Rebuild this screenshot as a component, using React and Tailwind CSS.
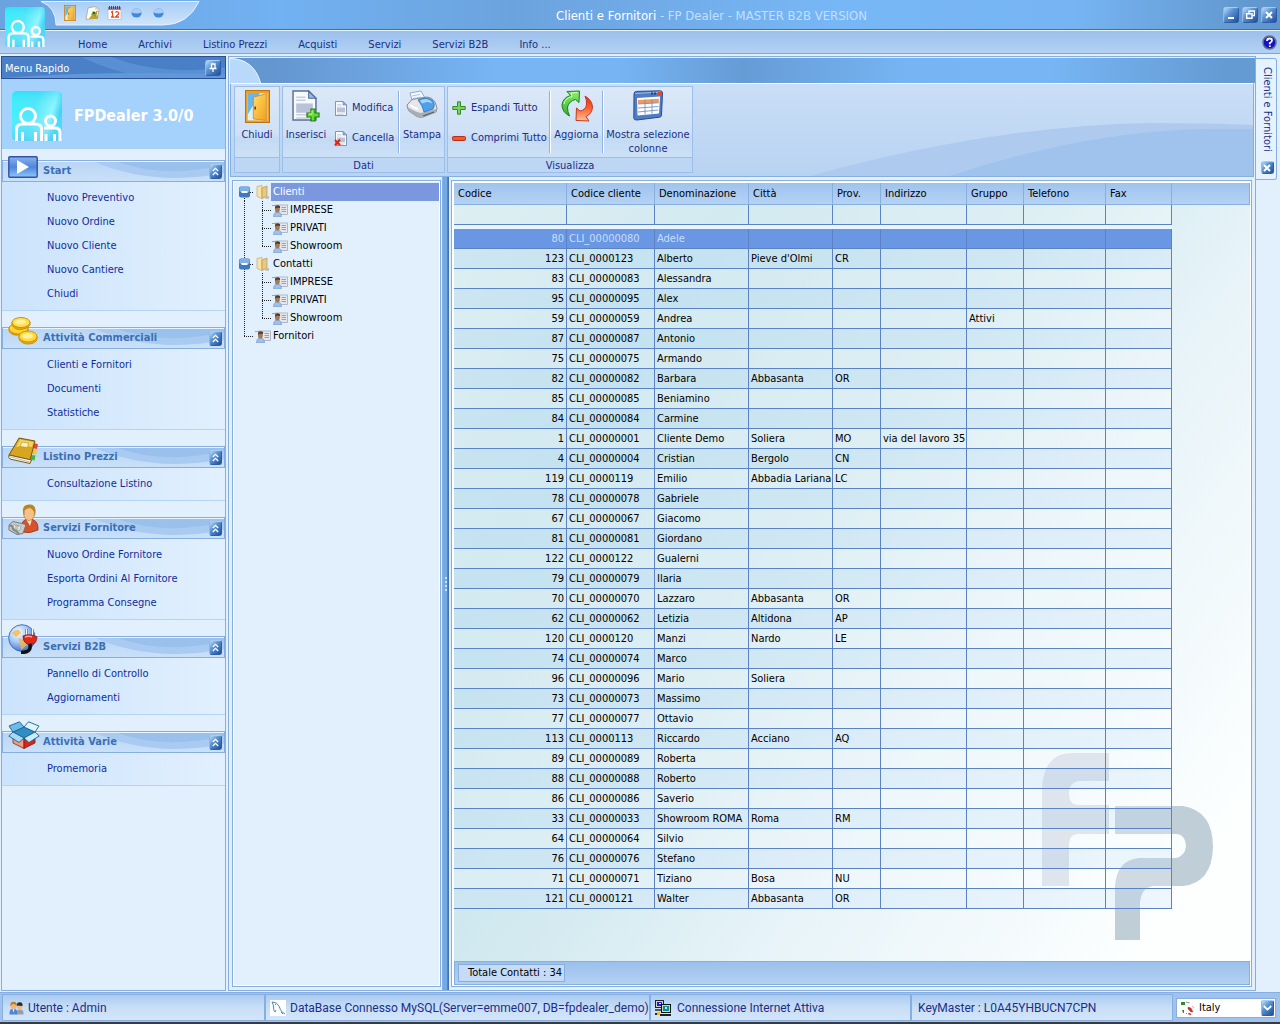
import React from "react";

const CUSTOMERS = [
  ["80", "CLI_00000080", "Adele"],
  ["123", "CLI_0000123", "Alberto", "Pieve d'Olmi", "CR"],
  ["83", "CLI_00000083", "Alessandra"],
  ["95", "CLI_00000095", "Alex"],
  ["59", "CLI_00000059", "Andrea", "", "", "", "Attivi"],
  ["87", "CLI_00000087", "Antonio"],
  ["75", "CLI_00000075", "Armando"],
  ["82", "CLI_00000082", "Barbara", "Abbasanta", "OR"],
  ["85", "CLI_00000085", "Beniamino"],
  ["84", "CLI_00000084", "Carmine"],
  ["1", "CLI_00000001", "Cliente Demo", "Soliera", "MO", "via del lavoro 35"],
  ["4", "CLI_00000004", "Cristian", "Bergolo", "CN"],
  ["119", "CLI_0000119", "Emilio", "Abbadia Lariana", "LC"],
  ["78", "CLI_00000078", "Gabriele"],
  ["67", "CLI_00000067", "Giacomo"],
  ["81", "CLI_00000081", "Giordano"],
  ["122", "CLI_0000122", "Gualerni"],
  ["79", "CLI_00000079", "Ilaria"],
  ["70", "CLI_00000070", "Lazzaro", "Abbasanta", "OR"],
  ["62", "CLI_00000062", "Letizia", "Altidona", "AP"],
  ["120", "CLI_0000120", "Manzi", "Nardo", "LE"],
  ["74", "CLI_00000074", "Marco"],
  ["96", "CLI_00000096", "Mario", "Soliera"],
  ["73", "CLI_00000073", "Massimo"],
  ["77", "CLI_00000077", "Ottavio"],
  ["113", "CLI_0000113", "Riccardo", "Acciano", "AQ"],
  ["89", "CLI_00000089", "Roberta"],
  ["88", "CLI_00000088", "Roberto"],
  ["86", "CLI_00000086", "Saverio"],
  ["33", "CLI_00000033", "Showroom ROMA", "Roma", "RM"],
  ["64", "CLI_00000064", "Silvio"],
  ["76", "CLI_00000076", "Stefano"],
  ["71", "CLI_00000071", "Tiziano", "Bosa", "NU"],
  ["121", "CLI_0000121", "Walter", "Abbasanta", "OR"],
];

const COLUMNS = [
  ["Codice", "w-[113px]"],
  ["Codice cliente", "w-[88px]"],
  ["Denominazione", "w-[94px]"],
  ["Città", "w-[84px]"],
  ["Prov.", "w-[48px]"],
  ["Indirizzo", "w-[86px]"],
  ["Gruppo", "w-[57px]"],
  ["Telefono", "w-[82px]"],
  ["Fax", "w-[66px]"],
];

function PeopleLogo({ size }) {
  return (
    <svg width={size} height={size} viewBox="0 0 50 50" className="shrink-0" aria-hidden="true">
      <defs>
        <linearGradient id="pl" x1="0" y1="0" x2="1" y2="0.3">
          <stop offset="0" stopColor="#3af0fb" />
          <stop offset="0.5" stopColor="#4fe6fb" />
          <stop offset="0.85" stopColor="#8ff5fd" />
          <stop offset="1" stopColor="#3fd3f5" />
        </linearGradient>
        <linearGradient id="pl2" x1="0" y1="0" x2="0" y2="1">
          <stop offset="0" stopColor="#19c6f0" stopOpacity="0.35" />
          <stop offset="0.4" stopColor="#8ff" stopOpacity="0" />
          <stop offset="1" stopColor="#5cc8f2" stopOpacity="0.7" />
        </linearGradient>
      </defs>
      <rect width="50" height="50" rx="5" fill="url(#pl)" />
      <rect width="50" height="50" rx="5" fill="url(#pl2)" />
      <g fill="none" stroke="#fff" strokeWidth="3">
        <circle cx="16" cy="25" r="7.5" />
        <circle cx="38.500" cy="30" r="5" />
        <path d="M4.500 50V38q0-5 6-5h13q6 0 6 5v12M10.500 50v-9M23.500 50v-9" />
        <path d="M32 37h11q5 0 5 4v9M34 50v-7M42.500 50v-7" />
      </g>
    </svg>
  );
}

function DoorIcon({ w, h }) {
  return (
    <svg width={w} height={h} viewBox="0 0 24 32" preserveAspectRatio="none" aria-hidden="true">
      <defs>
        <linearGradient id="door" x1="0" y1="0" x2="1" y2="1">
          <stop offset="0" stopColor="#ffdc6b" />
          <stop offset="1" stopColor="#f4a01a" />
        </linearGradient>
      </defs>
      <rect x="0.500" y="0.500" width="23" height="31" fill="#f0a11f" stroke="#b87414" />
      <rect x="2.500" y="3" width="19" height="26.500" fill="#d9f0ff" />
      <path d="M2.500 3h12L2.500 24z" fill="#63b7f2" />
      <path d="M8 7 20.500 3.500v26L8 28z" fill="url(#door)" stroke="#d08a1c" strokeWidth="0.800" />
      <rect x="9" y="16" width="1.500" height="3" fill="#6b3e05" />
    </svg>
  );
}

function EditSheetIcon() {
  return (
    <svg width="15" height="14" viewBox="0 0 15 14" aria-hidden="true">
      <path d="M3 2 10 0.500 14 3.500 12.500 12 1 13.500z" fill="#fdfdf6" stroke="#a9a38b" strokeWidth="0.800" />
      <path d="M10 0.500v3l4 0z" fill="#ddd6b8" />
      <path d="M8 5l4 2-1 5-5-3z" fill="#62b03a" />
      <path d="M7 11 12.500 5" stroke="#d98c17" strokeWidth="1.500" />
      <path d="M4 13q2-5 4-3t5-1v4z" fill="#c9a02f" />
      <circle cx="9" cy="7" r="1" fill="#333" />
    </svg>
  );
}

function CalendarIcon() {
  return (
    <svg width="15" height="14" viewBox="0 0 15 14" aria-hidden="true">
      <rect x="1" y="1.500" width="13" height="12" fill="#fff" stroke="#b9bfd2" strokeWidth="0.800" />
      <rect x="1" y="1" width="13" height="3" fill="#9a86a8" />
      <path d="M2.500 0v3M4.500 0v3M6.500 0v3M8.500 0v3M10.500 0v3M12.500 0v3" stroke="#403848" strokeWidth="0.900" />
      <path d="M4 6.500 5.500 5.500V11M4 11h3M8.500 6.500q1-1.500 2.500-.5t0 2.500L8.500 11H12" fill="none" stroke="#e0481e" strokeWidth="1.300" />
    </svg>
  );
}

function BallIcon() {
  return (
    <svg width="11" height="10" viewBox="0 0 11 10" aria-hidden="true">
      <ellipse cx="5.500" cy="5" rx="5" ry="4.500" fill="#3f87e0" />
      <path d="M0.500 4.500a5 4 0 0 1 10 0q-5 2-10 0z" fill="#a9cdf7" />
    </svg>
  );
}

function SheetPath({ w, h }) {
  return (
    <svg width={w} height={h} viewBox="0 0 24 30" preserveAspectRatio="none" aria-hidden="true">
      <path d="M1 1h15l7 7v21H1z" fill="#f6faff" stroke="#5b6f95" strokeWidth="1.400" />
      <path d="M16 1v7h7z" fill="#9db9dd" stroke="#4d6a9c" />
      <path d="M4 7h9M4 10h9M4 24h16M4 27h13" stroke="#c7cede" strokeWidth="1.500" />
      <rect x="4" y="13" width="16" height="9" fill="#b9c2d6" />
    </svg>
  );
}

function InsertIcon() {
  return (
    <span className="relative block h-[32px] w-[28px]">
      <SheetPath w={25} h={31} />
      <svg className="absolute right-0 bottom-0" width="14" height="14" viewBox="0 0 14 14" aria-hidden="true">
        <path d="M5 1h4v4h4v4H9v4H5V9H1V5h4z" fill="#62e02b" stroke="#1e7d16" strokeWidth="1.200" />
        <path d="M6 2.500v3.500H2.500" fill="none" stroke="#c6ff9c" />
      </svg>
    </span>
  );
}

function DeleteIcon() {
  return (
    <span className="relative block h-[15px] w-[14px] pl-px">
      <SheetPath w={12} h={15} />
      <svg className="absolute bottom-0 left-0" width="7" height="7" viewBox="0 0 7 7" aria-hidden="true">
        <path d="M1 1l5 5M6 0.500 1 6.500" stroke="#d22b17" strokeWidth="2" />
      </svg>
    </span>
  );
}

function PrinterIcon() {
  return (
    <svg width="32" height="30" viewBox="0 0 32 30" aria-hidden="true">
      <path d="M4 3 15 1l5 9-13 4z" fill="#f4f9ff" stroke="#7e97b8" strokeWidth="0.800" />
      <path d="M6 6l8-1.500M7 8.500l8-1.500" stroke="#a8c6e8" />
      <path d="M1 15 6 9.500 21 7q5 0 8 5l2 6-1 4-13 5q-4 1-7-1l-7-5q-2-3-2-6z" fill="#e4e6ea" stroke="#6f747c" strokeWidth="0.800" />
      <path d="M1.500 17q8 5 13 6l16-4-1 3.500-12.500 4.500q-4 1-7-1l-7-5z" fill="#a9adb4" />
      <path d="M12 10q8-4 14 0 4 4 1 9l-9 3q-1-6-6-12z" fill="#4ba1ea" stroke="#2b6cb4" strokeWidth="0.800" />
      <path d="M14 10.500q6-3 10 0 2 1 2 3-4-3-10 0z" fill="#a8d6fa" />
      <path d="M4 15q4 3 8 4" stroke="#fff" strokeWidth="2" fill="none" />
      <path d="M17 26l11-4" stroke="#5a5d63" strokeWidth="1.200" />
    </svg>
  );
}

function RefreshIcon() {
  return (
    <svg width="32" height="32" viewBox="0 0 32 32" aria-hidden="true">
      <defs>
        <linearGradient id="rg" x1="0" y1="0" x2="0" y2="1">
          <stop offset="0" stopColor="#8df06c" />
          <stop offset="1" stopColor="#2fae2f" />
        </linearGradient>
        <linearGradient id="rr" x1="0" y1="0" x2="0" y2="1">
          <stop offset="0" stopColor="#e02c17" />
          <stop offset="0.500" stopColor="#ff6230" />
          <stop offset="1" stopColor="#ffc39c" />
        </linearGradient>
      </defs>
      <path d="M8.500 26Q1 22 1 15 2 7.500 9.500 5.500L6 1.500 18.500 1 18 12.500l-3.500-3Q8 11 6.500 17q0 5 2 9z" fill="url(#rg)" stroke="#1d7d1d" strokeWidth="1" />
      <path d="M24 6q7 4 7.500 11-.5 7-6.500 9.500l3 4.500-13-.5.500-12.500 3.500 3q5.500-1 6.500-6 .5-5-1.500-9z" fill="url(#rr)" stroke="#c23a1c" strokeWidth="1" />
      <path d="M3 14q1-6 8-7.500L10 3l6-.5" fill="none" stroke="#d5fdc5" />
    </svg>
  );
}

function ColumnsIcon() {
  return (
    <svg width="32" height="31" viewBox="0 0 32 31" aria-hidden="true">
      <path d="M2 4Q2 1.500 4.500 1.400L28 .8q2.500 0 2.500 2.200l-1 22q0 2-2 2.200L5 30q-3 .2-3.200-1.800z" fill="#4f7cc6" stroke="#2b4c86" />
      <path d="M3.500 3.500 29 2" stroke="#9fbfe9" strokeWidth="1.200" />
      <path d="M19 3.500h6" stroke="#23407a" strokeWidth="2" strokeDasharray="2 1" />
      <rect x="26" y="2" width="3" height="3" fill="#e24228" />
      <path d="M5 8 28 6.500 27 23.500 5.500 25.500z" fill="#fff" />
      <path d="M6 10 27 8.800l-.3 4L6 14z" fill="#f0995a" />
      <path d="M6 14l20.700-1.200M6 18l20.500-1.500M6 22l20.300-2M13 9.600v14.800M20 9.200v14.500" fill="none" stroke="#7592c0" strokeWidth="0.900" />
    </svg>
  );
}

function PlayIcon() {
  return (
    <svg width="30" height="22" viewBox="0 0 30 22" aria-hidden="true">
      <defs>
        <linearGradient id="pg" x1="0" y1="0" x2="0" y2="1">
          <stop offset="0" stopColor="#8cb2ee" />
          <stop offset="0.500" stopColor="#4f86dc" />
          <stop offset="1" stopColor="#8fc6fb" />
        </linearGradient>
      </defs>
      <rect x="0.800" y="0.800" width="28.400" height="20.400" rx="1" fill="url(#pg)" stroke="#3450a5" strokeWidth="1.400" />
      <path d="M9 4v14l12-7z" fill="#fff" />
    </svg>
  );
}

function CoinsIcon() {
  return (
    <svg width="30" height="28" viewBox="0 0 30 28" aria-hidden="true">
      <g stroke="#c7880b" strokeWidth="0.900">
        <path d="M1 11v3q3 5 10 4t9-5v-3z" fill="#e8ab14" />
        <ellipse cx="10.500" cy="11.500" rx="9.500" ry="5.500" fill="#fbd42f" />
        <path d="M4 5v3q3 5 9 4.500T22 8V5z" fill="#e8ab14" />
        <ellipse cx="13" cy="5.500" rx="9" ry="5" fill="#fde04a" />
        <path d="M11 19v3q3 5.500 10 5t8-5v-3z" fill="#e8ab14" />
        <ellipse cx="20" cy="19.500" rx="9" ry="5.500" fill="#fdda38" />
      </g>
      <ellipse cx="12.500" cy="5" rx="5.500" ry="2.500" fill="#fff09a" />
      <ellipse cx="19.500" cy="19" rx="5.500" ry="2.800" fill="#fff09a" />
    </svg>
  );
}

function BookIcon() {
  return (
    <svg width="30" height="27" viewBox="0 0 30 27" aria-hidden="true">
      <path d="M25 6l5 1-1 5-4-1z" fill="#e8472c" />
      <path d="M24 12l5 .5-1 5-4-.5z" fill="#f5c62b" />
      <path d="M23 18l4.500.5-1 5-4-1z" fill="#43b53c" />
      <path d="M11 1 27 4 22 23 1 18z" fill="#d8a51e" stroke="#7d560a" />
      <path d="M12 2.500 25.500 5 24 10Q14 8 8 10z" fill="#f1d562" />
      <path d="M1 18q-1 3 1 4l20 4.500 1.500-3.500z" fill="#fff" stroke="#7d560a" />
      <path d="M1 19.500 22 25" stroke="#b8b8b8" />
      <path d="M13.500 5l7 1-1 4.500-7-1z" fill="#fff3c0" stroke="#b58b20" strokeWidth="0.600" />
    </svg>
  );
}

function OperatorIcon() {
  return (
    <svg width="31" height="31" viewBox="0 0 31 31" aria-hidden="true">
      <path d="M13 23q1-8 8-8 8 0 9 8v3q-8 4-16 2z" fill="#d9532a" stroke="#9a3114" strokeWidth="0.800" />
      <path d="M18 15h6l-2 7z" fill="#f7e4d4" />
      <ellipse cx="21" cy="9" rx="5.500" ry="7.500" fill="#f6c08a" stroke="#b9793a" strokeWidth="0.700" />
      <path d="M15 8q-1-7 6-7.500T27.500 8q0 3-1 4.500Q27 6 22 4q-5 1-5.500 3v4.500q-1-1-1.500-3.500z" fill="#b9851d" />
      <path d="M1 21 5 17.500l13 3-3 9-6 1L1 26z" fill="#c9cbcd" stroke="#6d6f72" strokeWidth="0.900" />
      <path d="M6 20.500l7 2-1.500 4-6.500-2z" fill="#eff1f0" stroke="#8b8d90" strokeWidth="0.600" />
      <path d="M1.500 22q3-1 3 1.500T8 27l3 3" fill="none" stroke="#84878b" strokeWidth="2" />
      <path d="M7 22h4M6.500 24h4" stroke="#76a874" />
    </svg>
  );
}

function GlobeIcon() {
  return (
    <svg width="30" height="30" viewBox="0 0 30 30" aria-hidden="true">
      <defs>
        <radialGradient id="gl" cx="0.350" cy="0.300" r="0.800">
          <stop offset="0" stopColor="#fff" />
          <stop offset="0.450" stopColor="#a3c9f6" />
          <stop offset="1" stopColor="#2d62c6" />
        </radialGradient>
      </defs>
      <circle cx="14" cy="14" r="13.300" fill="url(#gl)" stroke="#3c69b8" strokeWidth="0.900" />
      <path d="M4 9q3-4 7-3l2 3-5 4zM10 14l7 2 2 5-6 5-1-7z" fill="#f1b848" opacity="0.800" />
      <path d="M18.500 5v7M24.500 5v7" stroke="#777c8c" strokeWidth="2.500" />
      <path d="M18.500 5v7M24.500 5v7" stroke="#fff" />
      <path d="M15 12q7-3 14 1-.5 6-4 7h-6q-4-2-4-8z" fill="#e2271b" stroke="#8d120c" strokeWidth="0.800" />
      <path d="M17 13q4-1.500 7 0" stroke="#ff9a8c" strokeWidth="1.500" fill="none" />
      <path d="M22 20q1 6-3 7.500-3 1-6 1" fill="none" stroke="#111" strokeWidth="3.500" />
    </svg>
  );
}

function BoxIcon() {
  return (
    <svg width="32" height="28" viewBox="0 0 32 28" aria-hidden="true">
      <path d="M5 12v10l11 5.500V17z" fill="#f19a82" stroke="#7b2a20" strokeWidth="0.800" />
      <path d="M27 12v10l-11 5.500V17z" fill="#dd2316" stroke="#7b1a12" strokeWidth="0.800" />
      <g stroke="#1d5f8f" strokeWidth="0.900" strokeLinejoin="round">
        <path d="M5 11 16 6l11 5-11 6z" fill="#2e8fc4" />
        <path d="M5 11 16 17l-5 4.500L.8 15z" fill="#a7dbf5" />
        <path d="M27 11 16 17l5 4.500L31.200 15z" fill="#c9ecfb" />
        <path d="M5 11 16 6 11.500.8 1 5z" fill="#6dbce6" />
        <path d="M27 11 16 6 20.500.8 31 5z" fill="#dff4fd" />
      </g>
    </svg>
  );
}

function FolderIcon() {
  return (
    <svg width="14" height="15" viewBox="0 0 14 15" aria-hidden="true">
      <path d="M1 1.500 6 .5v13l-5-2z" fill="#f6e3ac" stroke="#c8a960" strokeWidth="0.700" />
      <path d="M6 3l5-2v10l-5 2.500z" fill="#e6c983" stroke="#b6954a" strokeWidth="0.700" />
      <path d="M9 12l4-1v2.500l-3 .5z" fill="#b6b9bd" />
    </svg>
  );
}

function ContactIcon() {
  return (
    <svg width="16" height="13" viewBox="0 0 16 13" aria-hidden="true">
      <rect x="3.500" y="1" width="12" height="9.500" fill="#e4e8ee" stroke="#a3abb8" strokeWidth="0.800" />
      <path d="M9.500 3.500H14M9.500 5.500H14M9.500 7.500H14" stroke="#8b98ad" strokeWidth="0.900" />
      <path d="M0 1.500h4v3" fill="none" stroke="#9aa3b0" />
      <path d="M1.500 13q0-5 4-5t4 5z" fill="#9cc0ea" stroke="#6f96c6" strokeWidth="0.600" />
      <ellipse cx="5.500" cy="5.200" rx="2.300" ry="3.200" fill="#a8764f" />
      <path d="M3 5q-.3-3.800 2.700-3.800T8 4Q6 3.500 5 3.500T3 5z" fill="#4a3a2e" />
    </svg>
  );
}

function UsersIcon() {
  return (
    <svg width="15" height="14" viewBox="0 0 15 14" className="shrink-0" aria-hidden="true">
      <path d="M7 13.500q0-5 4-5t3.500 5z" fill="#9b9ea4" />
      <circle cx="10.500" cy="5.500" r="2.800" fill="#efb98a" />
      <path d="M7.500 4.500Q8 1 11 1.200T13.500 5z" fill="#2b2b30" />
      <path d="M0.500 13.500q-.5-6 4-6t3.500 6z" fill="#4a86d2" />
      <path d="M3.500 8l1 4 1-4z" fill="#e5e9f2" />
      <circle cx="4.500" cy="5" r="3" fill="#f0b57e" />
      <path d="M1.300 5Q1 .8 4.600.8T7.700 4.800Q6 3 4.500 3T1.300 5z" fill="#b8801c" />
    </svg>
  );
}

function MySqlIcon() {
  return (
    <svg width="16" height="16" viewBox="0 0 16 16" className="shrink-0" aria-hidden="true">
      <rect width="16" height="16" fill="#fff" />
      <path d="M2 2q5 0 7 4 1.500 4 2.500 5.500L15 14M2 2q1.500 3 1.500 5 0 4 1.500 5l1-2M11 12l2 2" fill="none" stroke="#35839f" strokeWidth="0.900" />
      <circle cx="5.500" cy="4.500" r="0.600" fill="#35839f" />
    </svg>
  );
}

function NetworkIcon() {
  return (
    <svg width="16" height="16" viewBox="0 0 16 16" shapeRendering="crispEdges" className="shrink-0" aria-hidden="true">
      <rect x="0.500" y="0.500" width="8" height="7" fill="#d4d0c8" stroke="#222" />
      <rect x="2" y="2" width="5" height="4" fill="#1b22c0" />
      <rect x="4" y="3" width="2" height="1" fill="#fff" />
      <path d="M0 9h8v2H0z" fill="#555" />
      <rect x="6.500" y="4.500" width="9" height="8" fill="#d4d0c8" stroke="#111" />
      <rect x="8" y="6" width="6" height="5" fill="#0b8f8c" />
      <rect x="10" y="7" width="2" height="2" fill="#9ff" />
      <path d="M5 14h11v2H5z" fill="#222" />
      <path d="M0 13h3v2H0z" fill="#222" />
      <rect x="2" y="12" width="3" height="3" fill="#e8c21a" />
    </svg>
  );
}

function FlagIcon() {
  return (
    <svg width="14" height="14" viewBox="0 0 14 14" aria-hidden="true">
      <path d="M0 1h4v3H0zM1 9l2 0v3H2z" fill="#2c8a32" />
      <path d="M5 1l3 1M8 1v1" stroke="#999" />
      <path d="M7 6l3 1 2 4-2 0-3-3zM8 12l2 1 0 1-3-1zM11 5l2 2" fill="#d02a24" stroke="#d02a24" strokeWidth="0.400" />
      <path d="M5 12l1 1" stroke="#888" />
    </svg>
  );
}

const GLOSS = "border border-[#2b5da8] border-t-[#a9cdf0] border-l-[#8fb9e6] bg-[linear-gradient(135deg,#bcdcf5_0%,#5b93d3_40%,#1f4c98_100%)]";

function GlossButton({ label, className, children }) {
  return (
    <button type="button" aria-label={label} className={`flex shrink-0 items-center justify-center rounded-[3px] ${GLOSS} ${className}`}>
      {children}
    </button>
  );
}

function CloseGlyph() {
  return (
    <svg width="8" height="8" viewBox="0 0 8 8" aria-hidden="true">
      <path d="M1 1l6 6M7 1 1 7" stroke="#fff" strokeWidth="2" />
    </svg>
  );
}

function TitleBar() {
  return (
    <header className="flex h-[30px] items-center border-b border-[#3f6fae] bg-[linear-gradient(90deg,#6aa3e0_0%,#72b1f2_22%,#6ba3de_40%,#78b7f6_66%,#76b4f3_84%,#649bd2_96%,#6095cd_100%)]">
      <div className="relative ml-[41px] flex h-full w-[159px] items-center pl-[23px]">
        <svg className="absolute top-px left-0" width="159" height="25" viewBox="0 0 159 25" aria-hidden="true">
          <defs>
            <linearGradient id="qa" x1="0" y1="0" x2="0" y2="1">
              <stop offset="0" stopColor="#a7cdf5" />
              <stop offset="1" stopColor="#cfe4fb" />
            </linearGradient>
          </defs>
          <path d="M0 .5h158q-11 23.500-36 23.500H15Q15 6 0 .5z" fill="url(#qa)" stroke="#e6f2fe" />
        </svg>
        <div className="relative -mt-[3px] flex items-center gap-[9px]">
          <button type="button" aria-label="Chiudi"><DoorIcon w={12} h={16} /></button>
          <button type="button" aria-label="Nuovo"><EditSheetIcon /></button>
          <button type="button" aria-label="Calendario" className="-ml-[2px]"><CalendarIcon /></button>
          <button type="button" aria-label="Indietro"><BallIcon /></button>
          <button type="button" aria-label="Avanti" className="ml-[2px]"><BallIcon /></button>
        </div>
      </div>
      <h1 className="flex-1 pt-[3px] text-center text-[13px] leading-[16px] text-[#c2e0fd]">
        <span className="text-white">Clienti e Fornitori</span> - FP Dealer - MASTER B2B VERSION
      </h1>
      <div className="flex gap-[3px] pr-[3px]">
        <GlossButton label="Riduci" className="size-[16px]">
          <span className="mt-[6px] h-[2px] w-[6px] bg-white" />
        </GlossButton>
        <GlossButton label="Ripristina" className="size-[16px]">
          <svg width="9" height="9" viewBox="0 0 9 9" aria-hidden="true">
            <path d="M3 3V1h5.500v4.500H6.500M.7 3.700h5.300v4.500H.7z" fill="none" stroke="#fff" strokeWidth="1.400" />
          </svg>
        </GlossButton>
        <GlossButton label="Chiudi finestra" className="size-[16px]"><CloseGlyph /></GlossButton>
      </div>
    </header>
  );
}

function MenuBar() {
  const items = ["Home", "Archivi", "Listino Prezzi", "Acquisti", "Servizi", "Servizi B2B", "Info ..."];
  return (
    <nav className="flex h-[24px] items-center gap-px border-t border-b border-t-[#e8f3fe] border-b-[#7ba6dc] bg-[linear-gradient(180deg,#9bc0ec,#b3d1f3)] pl-[63px]">
      {items.map((m) => (
        <button type="button" key={m} className="px-[15px] pt-[5px] whitespace-nowrap text-[#1a2e86]">{m}</button>
      ))}
      <button type="button" aria-label="Aiuto" className="mr-[3px] ml-auto">
        <svg width="15" height="15" viewBox="0 0 15 15" aria-hidden="true">
          <circle cx="7.500" cy="7.500" r="6.500" fill="#1414c4" stroke="#66708c" strokeWidth="1.500" />
          <path d="M5 6q0-2.500 2.500-2.500T10 5.500Q10 7 7.800 8v1.200M7.800 10.500v1.600" fill="none" stroke="#fff" strokeWidth="1.800" />
        </svg>
      </button>
    </nav>
  );
}

const SECTIONS = [
  { title: "Start", Icon: PlayIcon, items: ["Nuovo Preventivo", "Nuovo Ordine", "Nuovo Cliente", "Nuovo Cantiere", "Chiudi"] },
  { title: "Attività Commerciali", Icon: CoinsIcon, items: ["Clienti e Fornitori", "Documenti", "Statistiche"] },
  { title: "Listino Prezzi", Icon: BookIcon, items: ["Consultazione Listino"] },
  { title: "Servizi Fornitore", Icon: OperatorIcon, items: ["Nuovo Ordine Fornitore", "Esporta Ordini Al Fornitore", "Programma Consegne"] },
  { title: "Servizi B2B", Icon: GlobeIcon, items: ["Pannello di Controllo", "Aggiornamenti"] },
  { title: "Attività Varie", Icon: BoxIcon, items: ["Promemoria"] },
];

function Sidebar() {
  return (
    <aside className="ml-px flex w-[225px] shrink-0 flex-col border border-[#86aede] bg-[#e2f0fe]">
      <div className="relative -mx-px -mt-px flex h-[23px] items-center justify-between overflow-hidden border border-[#2a4f96] bg-[#4d86cc] pr-[4px] pl-[3px] text-white">
        <svg className="absolute inset-0 h-full w-full" viewBox="0 0 224 22" preserveAspectRatio="none" aria-hidden="true">
          <rect width="224" height="22" fill="#4a80c8" />
          <path d="M80 0H224V22H150Q110 16 80 0z" fill="#5990d4" />
          <path d="M110 0H224V11Q160 20 110 0z" fill="#487fc6" />
          <path d="M0 22Q100 14 224 18V22z" fill="#6098da" />
        </svg>
        <span className="relative pt-[2px]">Menu Rapido</span>
        <GlossButton label="Blocca menu" className="relative size-[16px]">
          <svg width="8" height="9" viewBox="0 0 8 9" aria-hidden="true">
            <path d="M2 1h4v4M2.500 1v4M.5 5.500h7M4 5.500V9" fill="none" stroke="#fff" strokeWidth="1.300" />
          </svg>
        </GlossButton>
      </div>
      <div className="flex h-[70px] items-center gap-[12px] bg-[#a5d1fd] pt-[4px] pl-[10px]">
        <PeopleLogo size={50} />
        <span className="text-[16px] font-bold text-white">FPDealer 3.0/0</span>
      </div>
      <div className="flex flex-col gap-[16px] pt-[11px]">
        {SECTIONS.map(({ title, Icon, items }) => (
          <section key={title}>
            <div className="relative flex h-[22px] items-center justify-between border border-[#86aede] bg-[linear-gradient(180deg,#b9d5f5,#c9e0f8)] pr-[2px] pl-[40px]">
              <svg className="absolute inset-0 h-full w-full" viewBox="0 0 222 20" preserveAspectRatio="none" aria-hidden="true">
                <path d="M90 0Q150 26 222 12V0z" fill="#a9caf1" />
                <path d="M112 0Q160 18 222 4V0z" fill="#9ac0ec" />
                <path d="M0 .5H222" stroke="#e9f4fe" />
              </svg>
              <span className="absolute bottom-[3px] left-[5px]"><Icon /></span>
              <h2 className="relative font-bold text-[#3a6fb5]">{title}</h2>
              <GlossButton label={`Comprimi ${title}`} className="relative h-[15px] w-[13px]">
                <svg width="7" height="9" viewBox="0 0 7 9" aria-hidden="true">
                  <path d="M.8 4 3.500 1.300 6.200 4M.8 8 3.500 5.300 6.200 8" fill="none" stroke="#fff" strokeWidth="1.300" />
                </svg>
              </GlossButton>
            </div>
            <ul className="border-b border-[#b5d3f3] bg-[linear-gradient(90deg,#cbe3fc,#e2f0fe)] py-[4px] pl-[45px]">
              {items.map((it) => (
                <li key={it} className="flex h-[24px] items-center">
                  <a href="#" className="text-[#0f2d9b]">{it}</a>
                </li>
              ))}
            </ul>
          </section>
        ))}
      </div>
    </aside>
  );
}

function BigButton({ label, className, children }) {
  return (
    <button type="button" className={`flex flex-col items-center pt-[3px] leading-[14px] ${className}`}>
      <span className="flex h-[38px] items-start justify-center">{children}</span>
      <span>{label}</span>
    </button>
  );
}

function RibbonGroup({ title, className, children }) {
  return (
    <div className={`flex h-[87px] flex-col border border-[#9bbfe9] bg-[linear-gradient(180deg,#dbe8f8_0%,#cfe1f6_55%,#c3daf4_60%,#d4e5f8_100%)] ${className}`}>
      <div className="flex flex-1">{children}</div>
      <div className="h-[15px] border-t border-[#9bbfe9] bg-[#bdd6f3] text-center leading-[16px]">{title}</div>
    </div>
  );
}

function Separator() {
  return <span className="mt-[4px] h-[62px] w-[2px] border-r border-l border-r-white border-l-[#8db2e3]" />;
}

function SmallButton({ label, gap, children }) {
  return (
    <button type="button" className={`flex h-[30px] items-center whitespace-nowrap ${gap}`}>
      {children}
      <span>{label}</span>
    </button>
  );
}

function Ribbon() {
  return (
    <div className="relative border border-[#86aede] border-t-white bg-[linear-gradient(180deg,#cadef6,#b8d3f2)] p-[2px] pb-[3px] text-[#1a2e86]">
      <svg className="absolute inset-0 h-full w-full" viewBox="0 0 1024 92" preserveAspectRatio="none" aria-hidden="true">
        <path d="M580 92Q760 42 920 39Q980 39 1024 41V92z" fill="#aecbef" />
        <path d="M720 92Q860 46 980 45L1024 45V92z" fill="#9fc3ed" />
      </svg>
      <div className="relative flex gap-[2px] pl-px">
        <RibbonGroup title="" className="w-[46px]">
          <BigButton label="Chiudi" className="w-full"><DoorIcon w={25} h={33} /></BigButton>
        </RibbonGroup>
        <RibbonGroup title="Dati" className="w-[163px]">
          <BigButton label="Inserisci" className="w-[46px]"><InsertIcon /></BigButton>
          <div className="ml-[5px] flex w-[64px] flex-col pt-[6px]">
            <SmallButton label="Modifica" gap="gap-[5px]"><span className="pl-px"><SheetPath w={12} h={15} /></span></SmallButton>
            <SmallButton label="Cancella" gap="gap-[4px]"><DeleteIcon /></SmallButton>
          </div>
          <Separator />
          <BigButton label="Stampa" className="flex-1"><PrinterIcon /></BigButton>
        </RibbonGroup>
        <RibbonGroup title="Visualizza" className="w-[246px]">
          <div className="ml-[4px] flex w-[97px] flex-col pt-[6px]">
            <SmallButton label="Espandi Tutto" gap="gap-[5px]">
              <svg width="14" height="14" viewBox="0 0 14 14" aria-hidden="true">
                <path d="M5.500.8h3v4.700h4.700v3H8.500v4.700h-3V8.500H.8v-3h4.700z" fill="#7fd25c" stroke="#2f8c2c" />
              </svg>
            </SmallButton>
            <SmallButton label="Comprimi Tutto" gap="gap-[5px]">
              <svg width="14" height="5" viewBox="0 0 14 5" aria-hidden="true">
                <rect x="0.500" y="0.500" width="13" height="4" rx="1" fill="#ee5a30" stroke="#b4301a" />
              </svg>
            </SmallButton>
          </div>
          <Separator />
          <BigButton label="Aggiorna" className="w-[51px]"><RefreshIcon /></BigButton>
          <Separator />
          <BigButton label="Mostra selezione colonne" className="flex-1"><ColumnsIcon /></BigButton>
        </RibbonGroup>
      </div>
    </div>
  );
}

const TREE = [
  { label: "Clienti", children: ["IMPRESE", "PRIVATI", "Showroom"], selected: true },
  { label: "Contatti", children: ["IMPRESE", "PRIVATI", "Showroom"] },
  { label: "Fornitori" },
];

function Branch({ d, expander }) {
  return (
    <svg width="18" height="18" viewBox="0 0 18 18" shapeRendering="crispEdges" className="shrink-0" aria-hidden="true">
      <path d={d} fill="none" stroke="#222" strokeDasharray="1 1" />
      {expander && (
        <g shapeRendering="auto">
          <rect x="3" y="3.500" width="11" height="11" rx="2" fill="#3f78c4" />
          <rect x="3.500" y="4" width="10" height="5" rx="1.500" fill="#7fb0e6" />
          <rect x="5.500" y="8" width="6" height="2" fill="#fff" />
        </g>
      )}
    </svg>
  );
}

function Tree() {
  return (
    <div className="flex w-[209px] shrink-0 flex-col border border-[#86aede] bg-white p-px">
      <ul className="flex-1 bg-[#e2f0fe] pt-px pl-[2px] text-black">
        {TREE.map((n, i) => (
          <li key={n.label}>
            <div className="flex h-[18px] items-center">
              <Branch
                d={n.children ? (i === 0 ? "M8.500 9V18M8 9.500H18" : "M8.500 0V18M8 9.500H18") : "M8.500 0V10M8 9.500H18"}
                expander={!!n.children}
              />
              <span className="flex w-[17px] shrink-0 justify-center">{n.children ? <FolderIcon /> : <ContactIcon />}</span>
              <button
                type="button"
                className={n.selected ? "h-full flex-1 bg-[#7b97e0] pl-[2px] text-left text-white" : "h-full pl-[2px] text-left"}
              >
                {n.label}
              </button>
            </div>
            {n.children && (
              <ul>
                {n.children.map((c, j) => (
                  <li key={c} className="flex h-[18px] items-center">
                    <Branch d="M8.500 0V18" />
                    <Branch d={j === 2 ? "M8.500 0V10M8 9.500H18" : "M8.500 0V18M8 9.500H18"} />
                    <span className="flex w-[16px] shrink-0 justify-center"><ContactIcon /></span>
                    <button type="button" className="pl-[2px] text-left">{c}</button>
                  </li>
                ))}
              </ul>
            )}
          </li>
        ))}
      </ul>
    </div>
  );
}

function Watermark() {
  return (
    <svg className="absolute right-[37px] bottom-[20px]" width="171" height="188" viewBox="0 0 171 188" aria-hidden="true">
      <path d="M0 133V35Q2 0 30 0H67V28H36Q27 30 27 40 27 52 36 52H67V81H36Q27 81 27 92V133z" fill="#d5dce6" />
      <path d="M73 53H141Q171 58 171 94 170 130 141 133H112Q99 134 98 150V187H73V133Q75 107 97 105H134Q143 103 144 93 143 81 134 81H73z" fill="#c0ced8" />
    </svg>
  );
}

function rowTone(i) {
  if (i === 0) return "bg-[#6a97e3] text-[#c9defb]";
  return i % 2 === 1 ? "bg-[#c3e0fb]/25" : "bg-white/25";
}

function Grid() {
  return (
    <div className="flex min-w-0 flex-1 flex-col border border-[#86aede] bg-white pt-[2px] pr-px pb-px pl-[2px]">
      <div className="relative flex-1 bg-[linear-gradient(125deg,#d3eaef_0%,#c4e3ec_22%,#d3eaf0_45%,#e6f3f8_62%,#fdffff_92%)]">
        <Watermark />
        <table className="relative w-full table-fixed border-separate border-spacing-0">
          <thead>
            <tr>
              {COLUMNS.map(([c, w]) => (
                <th key={c} scope="col" className={`${w} h-[22px] border-r border-b border-[#86aede] bg-[linear-gradient(180deg,#9fc3ee,#b4d2f4)] px-[4px] text-left font-normal whitespace-nowrap`}>
                  {c}
                </th>
              ))}
              <th className="h-[22px] border-r border-b border-[#86aede] bg-[linear-gradient(180deg,#9fc3ee,#b4d2f4)]" aria-hidden="true" />
            </tr>
            <tr>
              {COLUMNS.map(([c]) => (
                <td key={c} className="h-[20px] border-r border-b border-[#5c82c6] bg-white/25 p-0">
                  <input type="text" aria-label={`Filtra ${c}`} className="block h-[19px] w-full bg-transparent px-[2px] outline-none" />
                </td>
              ))}
              <td />
            </tr>
            <tr>
              <td colSpan={9} className="h-[4px] bg-[#e9f5fd] p-0" />
              <td className="p-0" />
            </tr>
          </thead>
          <tbody>
            {CUSTOMERS.map((row, i) => (
              <tr key={row[1]}>
                {COLUMNS.map(([c], k) => (
                  <td
                    key={c}
                    className={`h-[20px] border-r border-b border-[#5c82c6] px-[2px] py-0 leading-[16px] whitespace-nowrap ${rowTone(i)} ${k === 0 ? "text-right" : "text-left"}`}
                  >
                    {row[k] || ""}
                  </td>
                ))}
                <td className="p-0" />
              </tr>
            ))}
          </tbody>
        </table>
      </div>
      <div className="flex h-[24px] items-center border border-[#86aede] bg-[linear-gradient(180deg,#9bc0ec,#b3d1f3)] pl-[3px]">
        <span className="flex h-[18px] items-center border border-[#86aede] bg-[#c6dcf6] pr-[2px] pl-[9px]">Totale Contatti : 34</span>
      </div>
    </div>
  );
}

function StatusBar() {
  const cell = "flex items-center gap-[4px] overflow-hidden border border-[#86aede] bg-[linear-gradient(180deg,#a9cbf1_0%,#c8def6_50%,#d3e5f9_100%)] font-[Roboto,'Open_Sans',sans-serif] text-[12px] whitespace-nowrap text-[#1a2e86]";
  return (
    <footer className="grid h-[32px] grid-cols-[263fr_385fr_261fr_262fr_107px] border-t border-b-2 border-t-[#86aede] border-b-[#3b3a40] bg-[#9fc3ee] py-px pl-[2px]">
      <div className={`${cell} pl-[6px]`}><UsersIcon /><span>Utente : Admin</span></div>
      <div className={`${cell} pl-[4px]`}><MySqlIcon /><span>DataBase Connesso MySQL(Server=emme007, DB=fpdealer_demo)</span></div>
      <div className={`${cell} pl-[4px]`}><NetworkIcon /><span className="pl-[2px]">Connessione Internet Attiva</span></div>
      <div className={`${cell} pl-[6px]`}><span>KeyMaster : L0A45YHBUCN7CPN</span></div>
      <div className="flex items-center pl-[3px]">
        <div className="relative flex h-[20px] w-[100px] items-center border border-[#86aede] bg-white">
          <span className="pointer-events-none absolute left-[4px]"><FlagIcon /></span>
          <select aria-label="Lingua" defaultValue="Italy" className="h-full w-full appearance-none bg-transparent pl-[22px] text-black outline-none">
            <option>Italy</option>
          </select>
          <span className={`pointer-events-none absolute right-px flex h-[16px] w-[13px] items-center justify-center rounded-[2px] ${GLOSS}`}>
            <svg width="9" height="6" viewBox="0 0 9 6" aria-hidden="true">
              <path d="M.8 1 4.500 4.600 8.200 1" fill="none" stroke="#fff" strokeWidth="1.800" />
            </svg>
          </span>
        </div>
      </div>
    </footer>
  );
}

export default function App() {
  return (
    <div className="relative flex min-h-screen flex-col bg-[#e2f0fe] font-['DejaVu_Sans_Condensed','Noto_Sans',sans-serif] text-[11px] leading-[14px] text-black">
      <TitleBar />
      <MenuBar />
      <button type="button" aria-label="Menu applicazione" className="absolute top-[7px] left-[5px]"><PeopleLogo size={40} /></button>
      <div className="flex flex-1 gap-[2px] pt-[2px] pb-px">
        <Sidebar />
        <main className="flex min-w-0 flex-1 flex-col border border-[#86aede]">
          <div className="mt-px ml-px h-[25px] bg-[linear-gradient(90deg,#6496d0_0%,#6496d0_4%,#77b5f4_26%,#76b4f3_38%,#669cd6_50%,#76b4f3_66%,#77b5f4_80%,#659bd3_97%)]">
            <svg width="31" height="25" viewBox="0 0 31 25" aria-hidden="true">
              <path d="M0 0Q24 1 31 25H0z" fill="#b9d9fb" />
              <path d="M0 .5Q24 1 30.500 25" fill="none" stroke="#e6f3ff" />
            </svg>
          </div>
          <div className="px-px"><Ribbon /></div>
          <div className="flex flex-1 gap-px p-[3px]">
            <Tree />
            <div role="separator" aria-orientation="vertical" className="-my-[3px] flex w-[7px] shrink-0 items-center justify-center bg-[linear-gradient(90deg,#86b4e8_0%,#6ea6e2_35%,#7fb3ea_60%,#4f80c4_80%,#3d6bb0_100%)]">
              <span className="h-[14px] w-[3px] border-r-2 border-dotted border-[#cfe4fb]" />
            </div>
            <div className="flex min-w-0 flex-1 pl-px"><Grid /></div>
          </div>
        </main>
        <div className="flex w-[22px] shrink-0 flex-col">
          <div className="mt-[2px] -ml-[2px] flex h-[122px] w-[21px] flex-col items-center justify-between rounded-tr-[3px] rounded-br-[3px] border border-l-0 border-[#86aede] bg-[#e6f3fe] pt-[8px] pb-[5px] pl-[2px]">
            <button type="button" className="whitespace-nowrap text-[#1a2e86] [writing-mode:vertical-rl]">Clienti e Fornitori</button>
            <GlossButton label="Chiudi scheda" className="size-[13px]"><CloseGlyph /></GlossButton>
          </div>
        </div>
      </div>
      <StatusBar />
    </div>
  );
}
